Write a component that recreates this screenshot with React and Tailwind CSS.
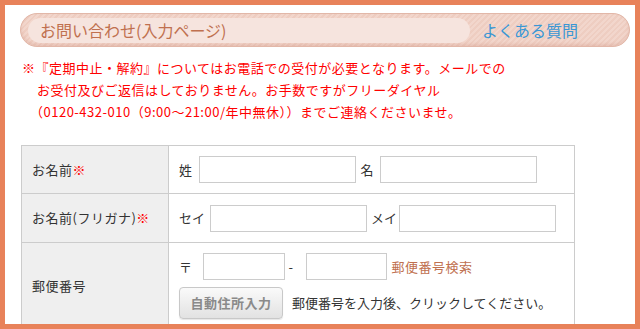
import React from 'react';

const font = "font-['MS_UI_Gothic','Noto_Sans_CJK_JP',sans-serif]";

function TextInput({ w }) {
  return <input type="text" className={`h-[27px] ${w} border border-[#cccccc] bg-white outline-none`} />;
}

export default function App() {
  return (
    <div className={`h-[329px] w-[640px] overflow-hidden border-[5px] border-[#e8825a] bg-white ${font}`}>
      {/* title bar */}
      <div className="pl-[15px] pr-[5px] pt-[8px]">
        <div className="flex h-[34px] items-center rounded-full border border-[#e2b7a8] bg-[#f0d2c7] bg-[repeating-linear-gradient(135deg,#f2d6cc_0px,#f2d6cc_2px,#eecdc1_2px,#eecdc1_4px)] pl-[7px] shadow-[inset_0_-2px_3px_rgba(200,130,110,0.25)]">
          <div className="flex h-[25px] w-[442px] items-center rounded-full bg-[#f6e4de] pl-[12px]">
            <span className="text-[16px] leading-none text-[#c0704f]">お問い合わせ(入力ページ)</span>
          </div>
          <a className="ml-[12px] text-[16px] leading-none text-[#3a97d4]">よくある質問</a>
        </div>
      </div>

      {/* notice */}
      <div className="pl-[17px] pt-[10px] text-[13px] leading-[22px] tracking-[0.5px] text-[#ff0000]">
        <p>※『定期中止・解約』についてはお電話での受付が必要となります。メールでの</p>
        <p className="pl-[15px]">お受付及びご返信はしておりません。お手数ですがフリーダイヤル</p>
        <p className="pl-[8px]">（0120-432-010（9:00～21:00/年中無休））までご連絡くださいませ。</p>
      </div>

      {/* form table */}
      <div className="ml-[16px] mt-[22px] w-[554px] border border-[#cccccc] text-[13px] tracking-[0.5px] text-[#333333]">
        <div className="flex h-[48px] border-b border-[#cccccc]">
          <div className="flex w-[147px] items-center border-r border-[#cccccc] bg-[#efefef] pl-[10px]">
            お名前<span className="text-[#ff0000]">※</span>
          </div>
          <div className="flex items-center pl-[10px]">
            <span>姓</span>
            <span className="ml-[6px]"><TextInput w="w-[157px]" /></span>
            <span className="ml-[5px]">名</span>
            <span className="ml-[6px]"><TextInput w="w-[157px]" /></span>
          </div>
        </div>
        <div className="flex h-[49px] border-b border-[#cccccc]">
          <div className="flex w-[147px] items-center border-r border-[#cccccc] bg-[#efefef] pl-[10px]">
            お名前(フリガナ)<span className="text-[#ff0000]">※</span>
          </div>
          <div className="flex items-center pl-[10px]">
            <span className="tracking-normal">セイ</span>
            <span className="ml-[5px]"><TextInput w="w-[157px]" /></span>
            <span className="ml-[4px] tracking-normal">メイ</span>
            <span className="ml-[2px]"><TextInput w="w-[157px]" /></span>
          </div>
        </div>
        <div className="flex h-[86px]">
          <div className="flex w-[147px] items-center border-r border-[#cccccc] bg-[#efefef] pl-[10px]">
            郵便番号
          </div>
          <div className="flex flex-col gap-[7px] pl-[10px] pt-[10px]">
            <div className="flex items-center">
              <span>〒</span>
              <span className="ml-[10px]"><TextInput w="w-[82px]" /></span>
              <span className="ml-[4px] w-[17px] text-left">-</span>
              <TextInput w="w-[81px]" />
              <a className="ml-[5px] text-[#c0704f]">郵便番号検索</a>
            </div>
            <div className="flex items-center">
              <button className="h-[32px] w-[104px] rounded-[4px] border border-[#c8c8c8] bg-gradient-to-b from-[#fafafa] to-[#e2e2e2] text-[13px] font-bold tracking-[0.5px] text-[#8a8a8a] shadow-[0_1px_1px_rgba(0,0,0,0.1)]">
                自動住所入力
              </button>
              <span className="ml-[9px] tracking-normal">郵便番号を入力後、クリックしてください。</span>
            </div>
          </div>
        </div>
      </div>
    </div>
  );
}
